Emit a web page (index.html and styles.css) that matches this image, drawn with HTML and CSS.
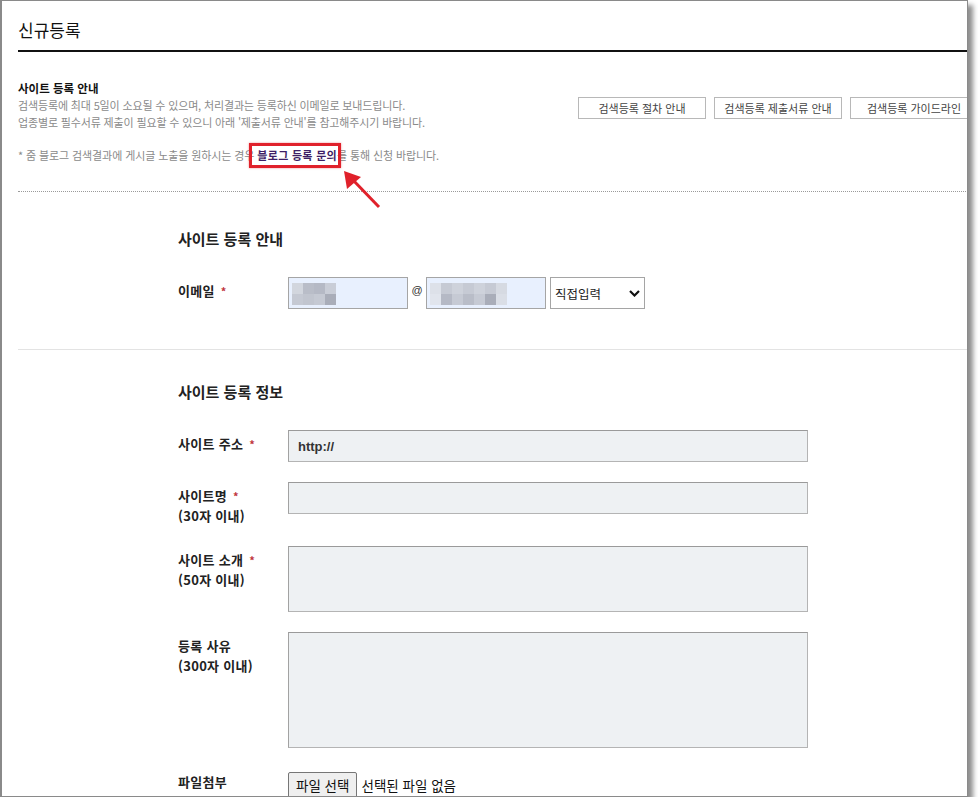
FILE: index.html
```html
<!DOCTYPE html>
<html lang="ko">
  <head>
    <meta charset="UTF-8" />
    <title>신규등록</title>
    <meta name="viewport" content="width=device-width, initial-scale=1" />
    <link rel="stylesheet" href="styles.css">
  </head>

  <body>
    <div class="window">
      <div class="page">
        <h1 class="title">신규등록</h1>

        <!-- Guide text with the three help buttons -->
        <div class="guide">
          <div class="guide-text">
            <h2 class="guide-title">사이트 등록 안내</h2>
            <p class="guide-desc">
              검색등록에 최대 5일이 소요될 수 있으며, 처리결과는 등록하신 이메일로 보내드립니다.<br />
              업종별로 필수서류 제출이 필요할 수 있으니 아래 '제출서류 안내'를 참고해주시기 바랍니다.
            </p>
            <p class="guide-note">
              * 줌 블로그 검색결과에 게시글 노출을 원하시는 경우 <a class="mark">블로그 등록 문의</a>를 통해 신청 바랍니다.
            </p>
          </div>
          <div class="guide-buttons">
            <button class="guide-btn">검색등록 절차 안내</button>
            <button class="guide-btn">검색등록 제출서류 안내</button>
            <button class="guide-btn">검색등록 가이드라인</button>
          </div>
        </div>

        <!-- Contact email -->
        <div class="form-section">
          <h3 class="section-title">사이트 등록 안내</h3>
          <div class="form-row">
            <label class="form-label">이메일 <span class="req">*</span></label>
            <div class="email-field">
              <span class="blur-wrap">
                <input type="text" class="email-input email-id" />
                <span class="mosaic mosaic-id">
                  <i></i><i></i><i></i><i></i><i></i><i></i><i></i><i></i>
                </span>
              </span>
              <span class="at">@</span>
              <span class="blur-wrap">
                <input type="text" class="email-input email-domain" />
                <span class="mosaic mosaic-domain">
                  <i></i><i></i><i></i><i></i><i></i><i></i><i></i>
                  <i></i><i></i><i></i><i></i><i></i><i></i><i></i>
                </span>
              </span>
              <span class="select-wrap">
                <select class="email-select">
                  <option>직접입력</option>
                </select>
                <svg class="chevron" width="11" height="7" viewBox="0 0 11 7">
                  <path d="M1 1 L5.5 5.5 L10 1" fill="none" stroke="#111" stroke-width="2.2" />
                </svg>
              </span>
            </div>
          </div>
        </div>

        <!-- Site information -->
        <div class="form-section section-info">
          <h3 class="section-title">사이트 등록 정보</h3>
          <div class="form-row">
            <label class="form-label">사이트 주소 <span class="req">*</span></label>
            <input type="text" class="text-input url-input" value="http://" />
          </div>
          <div class="form-row">
            <label class="form-label">사이트명 <span class="req">*</span><br />(30자 이내)</label>
            <input type="text" class="text-input" />
          </div>
          <div class="form-row">
            <label class="form-label">사이트 소개 <span class="req">*</span><br />(50자 이내)</label>
            <textarea class="text-input intro-area"></textarea>
          </div>
          <div class="form-row">
            <label class="form-label">등록 사유<br />(300자 이내)</label>
            <textarea class="text-input reason-area"></textarea>
          </div>
          <div class="form-row file-row">
            <label class="form-label file-label">파일첨부</label>
            <div class="file-field">
              <span class="file-btn">파일 선택</span>
              <span class="file-name">선택된 파일 없음</span>
            </div>
          </div>
        </div>
      </div>

      <!-- annotation arrow pointing to the marked link -->
      <svg class="arrow" width="46" height="46" viewBox="0 0 46 46">
        <line x1="39" y1="42" x2="12" y2="14" stroke="#e0212b" stroke-width="3" />
        <polygon points="4,6 7,24 21,12" fill="#e0212b" />
      </svg>
    </div>
  </body>
</html>
```

FILE: styles.css
```css
body {
  margin: 0;
  font-family: "Noto Sans CJK KR", "Noto Sans", sans-serif;
  background: #fff;
}

.window {
  position: relative;
  width: 965px;
  height: 795px;
  border: 1px solid #8a8a8a;
  border-left-width: 2px;
  background: #fff;
  overflow: hidden;
  box-shadow: 5px 5px 5px rgba(0, 0, 0, 0.45);
}

.page {
  padding-left: 16px;
  width: 1000px;
}

.title {
  margin: 0;
  padding: 19px 0 10px;
  font-size: 17px;
  line-height: 20px;
  font-weight: normal;
  letter-spacing: 0;
  color: #111;
  border-bottom: 2px solid #111;
}

.guide {
  display: flex;
  padding: 27px 0 27px;
  border-bottom: 1px dotted #9a9a9a;
}

.guide-text {
  width: 560px;
  flex-shrink: 0;
}

.guide-title {
  margin: 0;
  font-size: 11.5px;
  line-height: 18px;
  font-weight: bold;
  letter-spacing: 0;
  color: #111;
}

.guide-desc,
.guide-note {
  margin: 0;
  font-size: 11px;
  line-height: 17px;
  letter-spacing: -0.15px;
  color: #8a8a8a;
  white-space: nowrap;
}

.guide-note {
  margin-top: 16px;
  letter-spacing: -0.1px;
}

.mark {
  position: relative;
  font-weight: bold;
  color: #3e1f66;
  letter-spacing: 0.3px;
}

.mark::after {
  content: "";
  position: absolute;
  left: -8px;
  right: -4px;
  top: -4px;
  bottom: -5px;
  border: 3px solid #e0212b;
  box-shadow: 0 0 2px rgba(224, 33, 43, 0.5);
}

.guide-buttons {
  display: flex;
  gap: 8px;
  margin-top: 18px;
  align-self: flex-start;
}

.guide-btn {
  width: 128px;
  height: 22px;
  padding: 0;
  border: 1px solid #b8b8b8;
  background: #fff;
  font-family: "Noto Sans CJK KR", "Noto Sans", sans-serif;
  font-size: 11px;
  letter-spacing: 0;
  color: #444;
}

.form-section {
  padding: 37px 0 40px 160px;
  border-bottom: 1px solid #e3e3e3;
}

.section-info {
  border-bottom: none;
  padding-top: 32px;
}

.section-title {
  margin: 0 0 28px;
  font-size: 15px;
  line-height: 20px;
  font-weight: bold;
  letter-spacing: 0;
  color: #222;
}

.form-row {
  display: flex;
  align-items: flex-start;
}

.form-row + .form-row {
  margin-top: 20px;
}

.form-label {
  width: 110px;
  flex-shrink: 0;
  padding-top: 4px;
  font-size: 13px;
  line-height: 20px;
  font-weight: bold;
  letter-spacing: 0.3px;
  color: #222;
}

.req {
  margin-left: 2px;
  font-size: 11px;
  color: #c0353d;
}

.email-field {
  display: flex;
  align-items: center;
}

.blur-wrap {
  position: relative;
  display: block;
}

.email-input {
  display: block;
  box-sizing: border-box;
  height: 32px;
  margin: 0;
  border: 1px solid #a5a5a5;
  background: #e8f0fe;
}

.email-id {
  width: 120px;
}

.email-domain {
  width: 120px;
}

.mosaic {
  position: absolute;
  top: 6px;
  display: grid;
  grid-auto-rows: 11px;
}

.mosaic-id {
  left: 4px;
  grid-template-columns: repeat(4, 11px);
}

.mosaic-domain {
  left: 4px;
  grid-template-columns: repeat(7, 11px);
}

.mosaic-id i:nth-child(1) { background: #d2d6de; }
.mosaic-id i:nth-child(2) { background: #b9bdc8; }
.mosaic-id i:nth-child(3) { background: #b5b9c5; }
.mosaic-id i:nth-child(4) { background: #c9cdd7; }
.mosaic-id i:nth-child(5) { background: #c5c9d3; }
.mosaic-id i:nth-child(6) { background: #c1c5cf; }
.mosaic-id i:nth-child(7) { background: #c5c9d3; }
.mosaic-id i:nth-child(8) { background: #a9adb9; }

.mosaic-domain i:nth-child(odd) { background: #ced2db; }
.mosaic-domain i:nth-child(even) { background: #c6cad4; }
.mosaic-domain i:nth-child(1) { background: #dde1e9; }
.mosaic-domain i:nth-child(7) { background: #d6dae2; }
.mosaic-domain i:nth-child(8) { background: #e1e5ed; }
.mosaic-domain i:nth-child(9) { background: #b5b9c5; }
.mosaic-domain i:nth-child(11) { background: #b9bdc8; }
.mosaic-domain i:nth-child(13) { background: #a9adb9; }
.mosaic-domain i:nth-child(14) { background: #dadee6; }

.at {
  width: 18px;
  text-align: center;
  font-family: "Liberation Sans", sans-serif;
  font-size: 11px;
  color: #333;
  margin-top: -6px;
}

.select-wrap {
  position: relative;
  display: block;
  margin-left: 4px;
}

.email-select {
  display: block;
  width: 95px;
  height: 32px;
  margin: 0;
  padding: 0 0 0 4px;
  border: 1px solid #a5a5a5;
  border-radius: 0;
  background: #fff;
  appearance: none;
  font-family: "Noto Sans CJK KR", "Noto Sans", sans-serif;
  font-size: 12.5px;
  letter-spacing: 0;
  color: #222;
}

.chevron {
  position: absolute;
  right: 5px;
  top: 13px;
}

.text-input {
  display: block;
  box-sizing: border-box;
  width: 520px;
  height: 32px;
  margin: 0;
  border: 1px solid #b4b4b4;
  border-top-color: #9a9a9a;
  border-left-color: #a2a2a2;
  background: #eef1f3;
  resize: none;
}

.url-input {
  padding: 0 9px;
  font-family: "Liberation Sans", sans-serif;
  font-size: 13px;
  font-weight: bold;
  color: #333;
}

.intro-area {
  height: 66px;
}

.reason-area {
  height: 116px;
}

.form-row.file-row {
  margin-top: 24px;
}

.file-label {
  padding-top: 0;
}

.file-field {
  display: flex;
  align-items: center;
  font-size: 13.5px;
  letter-spacing: 0;
  color: #111;
}

.file-btn {
  box-sizing: border-box;
  height: 26px;
  padding: 2px 7px 0;
  border: 1px solid #767676;
  border-radius: 2px;
  background: #efefef;
  margin-right: 4px;
}

.arrow {
  position: absolute;
  left: 338px;
  top: 164px;
}
```
